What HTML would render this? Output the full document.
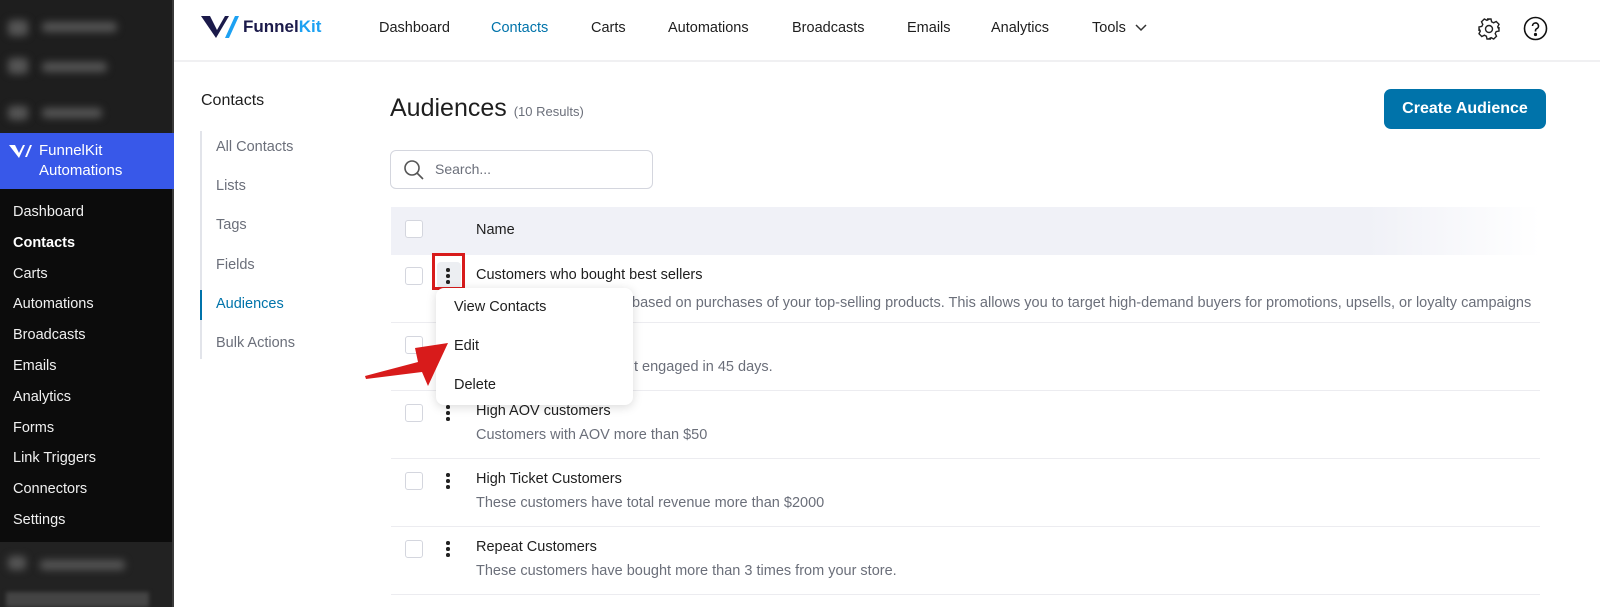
<!DOCTYPE html>
<html><head><style>
*{box-sizing:border-box;margin:0;padding:0}
body{width:1600px;height:607px;overflow:hidden;background:#fff;font-family:"Liberation Sans",sans-serif;position:relative;color:#1e1e1e}
.sb{position:absolute;left:0;top:0;width:174px;height:607px;background:#0c0c0c;border-right:2px solid #3a3a3a}
.blur{position:absolute;background:#555;filter:blur(4px);border-radius:4px}
.fk{position:absolute;top:133px;left:0;width:174px;height:56px;background:#3858e9;color:#fff;font-size:15px;line-height:20px;padding:8px 0 0 39px}
.menu{position:absolute;top:202px;left:13px;color:#f0f0f0;font-size:14.5px}
.menu div{height:30.8px;line-height:21px}
.abs{position:absolute}
.nav{position:absolute;top:20px;font-size:14.5px;color:#1e1e1e}
.sub{position:absolute;left:216px;font-size:14.5px;color:#6b6f7a}
.row{position:absolute;left:391px;width:1149px;border-bottom:1px solid #ececf0}
.cb{position:absolute;left:405px;width:18px;height:18px;border:1.5px solid #d4d6de;border-radius:3px;background:#fff}
.dots{position:absolute;left:446px;width:4px}
.dots i{display:block;width:3.5px;height:3.5px;background:#222;border-radius:50%;margin-bottom:2.5px}
.t{position:absolute;left:476px;font-size:14.5px;color:#1e1e1e}
.d{position:absolute;left:476px;font-size:14.5px;color:#6b6f7a;white-space:nowrap}
</style></head><body>
<div class="sb">
 <div class="abs" style="left:0;top:0;width:172px;height:133px;background:#1e1e1e"></div>
 <div class="blur" style="left:8px;top:20px;width:20px;height:16px"></div><div class="blur" style="left:42px;top:22px;width:75px;height:10px"></div>
 <div class="blur" style="left:8px;top:58px;width:20px;height:16px"></div><div class="blur" style="left:42px;top:62px;width:65px;height:10px"></div>
 <div class="blur" style="left:8px;top:106px;width:20px;height:14px"></div><div class="blur" style="left:42px;top:108px;width:60px;height:10px"></div>
 <div class="fk"><svg class="abs" style="left:8px;top:10px" width="24" height="16" viewBox="0 0 24 16"><path d="M1 2h6l4 8 4-8h2L11 15z" fill="#fff"/><path d="M17 14l5-12h2l-5 12z" fill="#fff"/></svg>FunnelKit<br>Automations</div>
 <div class="menu">
  <div>Dashboard</div><div style="font-weight:bold;color:#fff">Contacts</div><div>Carts</div><div>Automations</div><div>Broadcasts</div><div>Emails</div><div>Analytics</div><div>Forms</div><div>Link Triggers</div><div>Connectors</div><div>Settings</div>
 </div>
 <div class="abs" style="left:0;top:542px;width:172px;height:65px;background:#222"></div>
 <div class="blur" style="left:8px;top:556px;width:18px;height:14px"></div><div class="blur" style="left:40px;top:560px;width:85px;height:10px"></div>
 <div class="abs" style="left:6px;top:592px;width:143px;height:15px;background:#444;filter:blur(2px)"></div>
</div>
<div class="abs" style="left:174px;top:0;width:1426px;height:62px;border-bottom:2px solid #f0f0f2"></div>
<svg class="abs" style="left:201px;top:15px" width="38" height="24" viewBox="0 0 38 24"><path d="M0 1h9l7 14 8-14h4L15 23z" fill="#1b1a4a"/><path d="M24 23L34 1h4L28 23z" fill="#1da1f2"/></svg>
<div class="abs" style="left:243px;top:17px;font-size:17px;font-weight:bold;color:#1b1a4a">Funnel<span style="color:#1da1f2">Kit</span></div>
<div class="nav" style="left:379px">Dashboard</div>
<div class="nav" style="left:491px;color:#0073aa">Contacts</div>
<div class="nav" style="left:591px">Carts</div>
<div class="nav" style="left:668px">Automations</div>
<div class="nav" style="left:792px">Broadcasts</div>
<div class="nav" style="left:907px">Emails</div>
<div class="nav" style="left:991px">Analytics</div>
<div class="nav" style="left:1092px">Tools <svg width="14" height="10" style="margin-left:4px" viewBox="0 0 14 10"><path d="M2 3l5 5 5-5" stroke="#333" stroke-width="1.5" fill="none"/></svg></div>
<svg class="abs" style="left:1477px;top:17px" width="24" height="24" viewBox="0 0 24 24" fill="none" stroke="#222" stroke-width="1.4"><path d="M10 2h4l.6 2.8 2 1 2.6-1.3 2.8 2.8-1.3 2.6 1 2L22 10v4l-2.8.6-1 2 1.3 2.6-2.8 2.8-2.6-1.3-2 1L14 22h-4l-.6-2.8-2-1-2.6 1.3-2.8-2.8 1.3-2.6-1-2L2 14v-4l2.8-.6 1-2-1.3-2.6 2.8-2.8 2.6 1.3 2-1z"/><circle cx="12" cy="12" r="3.5"/></svg>
<svg class="abs" style="left:1523px;top:16px" width="25" height="25" viewBox="0 0 25 25" fill="none" stroke="#111" stroke-width="1.6"><circle cx="12.5" cy="12.5" r="11"/><path d="M9.5 10a3 3 0 1 1 4 2.8c-.8.4-1 1-1 2v.7"/><circle cx="12.5" cy="18.5" r=".8" fill="#111"/></svg>
<div class="abs" style="left:201px;top:92px;font-size:16px">Contacts</div>
<div class="abs" style="left:200px;top:131px;width:2px;height:228px;background:#e2e4ea"></div>
<div class="abs" style="left:200px;top:290px;width:2px;height:30px;background:#0073aa"></div>
<div class="sub" style="top:139px">All Contacts</div>
<div class="sub" style="top:178px">Lists</div>
<div class="sub" style="top:217px">Tags</div>
<div class="sub" style="top:257px">Fields</div>
<div class="sub" style="top:296px;color:#0073aa">Audiences</div>
<div class="sub" style="top:335px">Bulk Actions</div>
<div class="abs" style="left:390px;top:94px;font-size:25px;color:#1e1e1e">Audiences <span style="font-size:13px;color:#6b6f7a">(10 Results)</span></div>
<div class="abs" style="left:1384px;top:89px;width:162px;height:40px;background:#0073aa;border-radius:7px;color:#fff;font-size:16px;font-weight:bold;text-align:center;line-height:40px">Create Audience</div>
<div class="abs" style="left:390px;top:150px;width:263px;height:39px;border:1px solid #d4d6de;border-radius:6px"></div>
<svg class="abs" style="left:403px;top:159px" width="22" height="22" viewBox="0 0 22 22" fill="none" stroke="#555" stroke-width="1.6"><circle cx="9" cy="9" r="7"/><path d="M14 14l6 6"/></svg>
<div class="abs" style="left:435px;top:161px;font-size:14px;color:#6b6f7a">Search...</div>
<div class="abs" style="left:391px;top:207px;width:1149px;height:48px;background:linear-gradient(90deg,#f0f1f7 85%,#fff)"></div>
<div class="cb" style="top:220px"></div>
<div class="t" style="top:222px">Name</div>
<div class="row" style="top:255px;height:68px"></div>
<div class="row" style="top:323px;height:68px"></div>
<div class="row" style="top:391px;height:68px"></div>
<div class="row" style="top:459px;height:68px"></div>
<div class="row" style="top:527px;height:68px"></div>
<div class="cb" style="top:267px"></div><div class="cb" style="top:336px"></div><div class="cb" style="top:404px"></div><div class="cb" style="top:472px"></div><div class="cb" style="top:540px"></div>
<div class="abs" style="left:437px;top:262px;width:24px;height:26px;background:#eceef2;border-radius:4px"></div>
<div class="dots" style="top:268px"><i></i><i></i><i></i></div>
<div class="dots" style="top:405px"><i></i><i></i><i></i></div>
<div class="dots" style="top:473px"><i></i><i></i><i></i></div>
<div class="dots" style="top:541px"><i></i><i></i><i></i></div>
<div class="abs" style="left:432px;top:253px;width:33px;height:37px;border:3px solid #d81b1b"></div>
<div class="t" style="top:267px">Customers who bought best sellers</div>
<div class="d" style="top:295px;left:632px;width:908px;overflow:hidden">based on purchases of your top-selling products. This allows you to target high-demand buyers for promotions, upsells, or loyalty campaigns</div>
<div class="d" style="top:359px;left:634px">t engaged in 45 days.</div>
<div class="t" style="top:403px">High AOV customers</div>
<div class="d" style="top:427px">Customers with AOV more than $50</div>
<div class="t" style="top:471px">High Ticket Customers</div>
<div class="d" style="top:495px">These customers have total revenue more than $2000</div>
<div class="t" style="top:539px">Repeat Customers</div>
<div class="d" style="top:563px">These customers have bought more than 3 times from your store.</div>
<div class="abs" style="left:436px;top:288px;width:197px;height:117px;background:#fff;border-radius:8px;box-shadow:0 2px 10px rgba(0,0,0,.15)"></div>
<div class="abs" style="left:454px;top:299px;font-size:14.5px">View Contacts</div>
<div class="abs" style="left:454px;top:338px;font-size:14.5px">Edit</div>
<div class="abs" style="left:454px;top:377px;font-size:14.5px">Delete</div>
<svg class="abs" style="left:360px;top:330px" width="100" height="60" viewBox="0 0 100 60"><path d="M88 13L55 18 58 32 5 46 6 49 62 42 68 56z" fill="#d81b1b"/></svg>
</body></html>
